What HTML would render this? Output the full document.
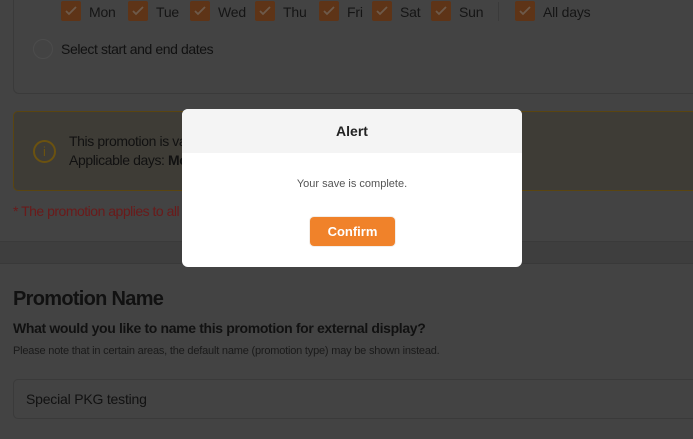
<!DOCTYPE html>
<html><head><meta charset="utf-8"><style>
*{margin:0;padding:0;box-sizing:border-box}
body{width:693px;height:439px;overflow:hidden;background:#434343;font-family:"Liberation Sans",sans-serif;color:#111;position:relative}
.a{position:absolute;white-space:nowrap}
.cb{position:absolute;top:1px;width:20px;height:20px;background:#5e3417;border-radius:2px}
.cb svg{position:absolute;left:4px;top:5px}
.lb{position:absolute;top:4px;font-size:14px;color:#151515;letter-spacing:-0.2px}
.t{letter-spacing:-0.4px}
</style></head><body>
<div class="a" style="left:13px;top:-10px;width:700px;height:104px;border:1px solid #3a3a3a;border-radius:6px"></div>
<div class="cb" style="left:61px"><svg width="12" height="10"><path d="M1 5l3 3 7-7" stroke="#6e5a4a" stroke-width="1.8" fill="none"/></svg></div><div class="lb" style="left:89px">Mon</div>
<div class="cb" style="left:128px"><svg width="12" height="10"><path d="M1 5l3 3 7-7" stroke="#6e5a4a" stroke-width="1.8" fill="none"/></svg></div><div class="lb" style="left:156px">Tue</div>
<div class="cb" style="left:190px"><svg width="12" height="10"><path d="M1 5l3 3 7-7" stroke="#6e5a4a" stroke-width="1.8" fill="none"/></svg></div><div class="lb" style="left:218px">Wed</div>
<div class="cb" style="left:255px"><svg width="12" height="10"><path d="M1 5l3 3 7-7" stroke="#6e5a4a" stroke-width="1.8" fill="none"/></svg></div><div class="lb" style="left:283px">Thu</div>
<div class="cb" style="left:319px"><svg width="12" height="10"><path d="M1 5l3 3 7-7" stroke="#6e5a4a" stroke-width="1.8" fill="none"/></svg></div><div class="lb" style="left:347px">Fri</div>
<div class="cb" style="left:372px"><svg width="12" height="10"><path d="M1 5l3 3 7-7" stroke="#6e5a4a" stroke-width="1.8" fill="none"/></svg></div><div class="lb" style="left:400px">Sat</div>
<div class="cb" style="left:431px"><svg width="12" height="10"><path d="M1 5l3 3 7-7" stroke="#6e5a4a" stroke-width="1.8" fill="none"/></svg></div><div class="lb" style="left:459px">Sun</div>
<div class="a" style="left:498px;top:2px;width:1px;height:19px;background:#3a3a3a"></div>
<div class="cb" style="left:515px"><svg width="12" height="10"><path d="M1 5l3 3 7-7" stroke="#6e5a4a" stroke-width="1.8" fill="none"/></svg></div><div class="lb" style="left:543px">All days</div>
<div class="a" style="left:33px;top:39px;width:20px;height:20px;border:1px solid #4c4c4c;border-radius:50%"></div>
<div class="a t" style="left:61px;top:41px;font-size:14px">Select start and end dates</div>
<div class="a" style="left:13px;top:111px;width:700px;height:80px;border:1px solid #5a4510;border-radius:5px;background:#3e3c36"></div>
<div class="a" style="left:33px;top:140px;width:23px;height:23px;border:2px solid #6b5210;border-radius:50%;color:#6b5210;font-size:13px;text-align:center;line-height:19px">i</div>
<div class="a t" style="left:69px;top:133px;font-size:14px">This promotion is va</div>
<div class="a t" style="left:69px;top:152px;font-size:14px">Applicable days: <b>Mo</b></div>
<div class="a" style="left:13px;top:203px;font-size:14px;color:#6a1a1a;letter-spacing:-0.5px">* The promotion applies to all</div>
<div class="a" style="left:0;top:241px;width:693px;height:23px;background:#3e3e3e;border-top:1px solid #3a3a3a;border-bottom:1px solid #393939"></div>
<div class="a" style="left:13px;top:288px;font-size:20px;font-weight:bold;letter-spacing:-0.7px">Promotion Name</div>
<div class="a" style="left:13px;top:320px;font-size:14px;font-weight:bold;letter-spacing:-0.35px">What would you like to name this promotion for external display?</div>
<div class="a" style="left:13px;top:345px;font-size:11px;color:#1a1a1a;letter-spacing:-0.2px">Please note that in certain areas, the default name (promotion type) may be shown instead.</div>
<div class="a" style="left:13px;top:379px;width:700px;height:40px;border:1px solid #3a3a3a;border-radius:5px"></div>
<div class="a" style="left:26px;top:391px;font-size:14px;letter-spacing:-0.2px">Special PKG testing</div>
<div class="a" style="left:182px;top:109px;width:340px;height:158px;background:#fff;border-radius:6px;overflow:hidden">
<div style="height:44px;background:#f4f4f4;text-align:center;line-height:44px;font-size:14px;color:#222;font-weight:600">Alert</div>
<div style="text-align:center;font-size:11px;color:#555;margin-top:25px">Your save is complete.</div>
<div style="position:absolute;left:128px;top:108px;width:85px;height:29px;background:#f0822a;border-radius:4px;color:#fff;font-weight:bold;font-size:13px;text-align:center;line-height:29px;box-shadow:0 0 0 1px #f3eee9">Confirm</div>
</div>
</body></html>
